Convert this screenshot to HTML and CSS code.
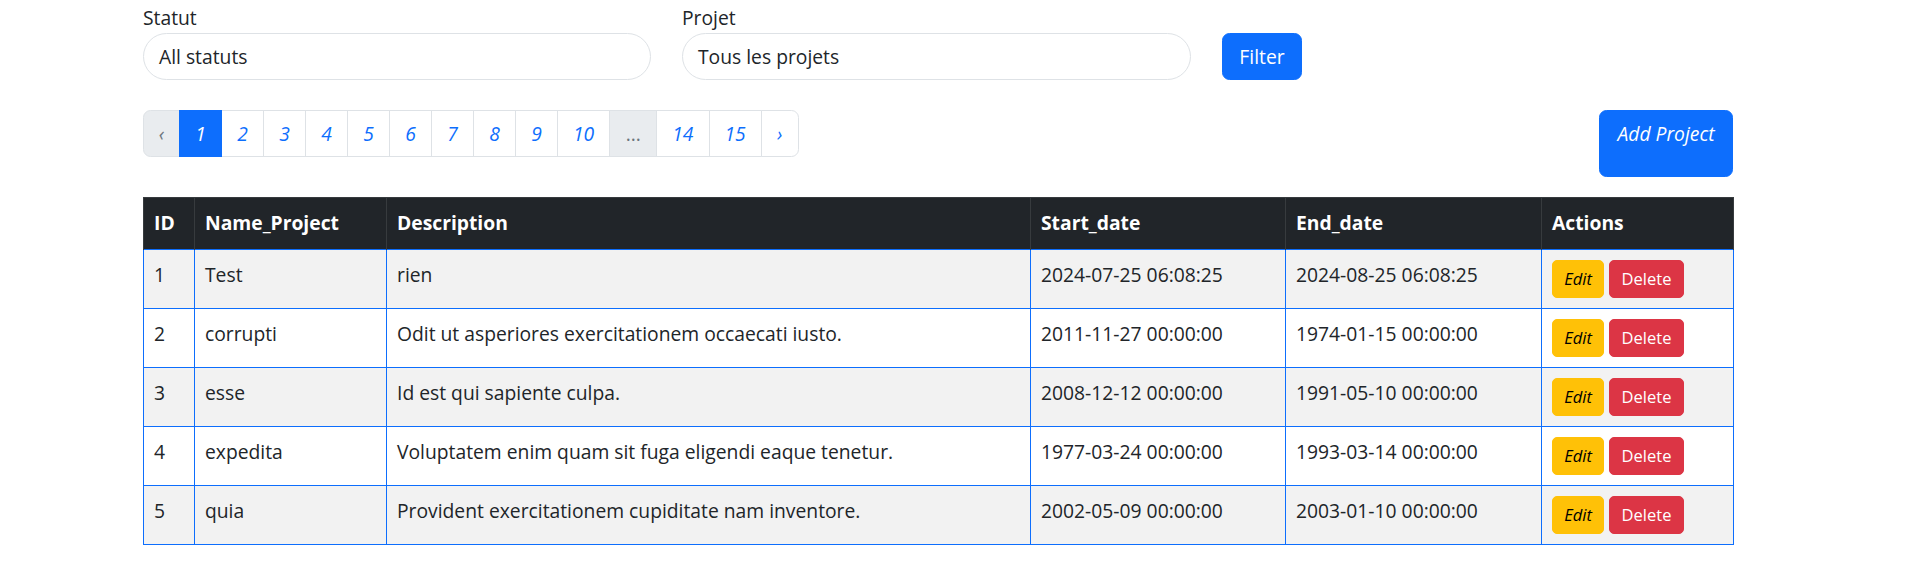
FILE: index.html
```html
<!DOCTYPE html>
<html lang="fr">
<head>
<meta charset="utf-8">
<title>Projets</title>
<link rel="stylesheet" href="styles.css">
</head>
<body>
<div class="page">
  <form class="filters">
    <div class="field field-statut">
      <label class="label">Statut</label>
      <div class="select">All statuts</div>
    </div>
    <div class="field field-projet">
      <label class="label">Projet</label>
      <div class="select">Tous les projets</div>
    </div>
    <button type="button" class="btn btn-primary btn-filter">Filter</button>
  </form>

  <div class="toolbar">
    <ul class="pagination">
      <li class="page-item disabled"><span class="page-link">&lsaquo;</span></li>
      <li class="page-item active"><span class="page-link">1</span></li>
      <li class="page-item"><span class="page-link">2</span></li>
      <li class="page-item"><span class="page-link">3</span></li>
      <li class="page-item"><span class="page-link">4</span></li>
      <li class="page-item"><span class="page-link">5</span></li>
      <li class="page-item"><span class="page-link">6</span></li>
      <li class="page-item"><span class="page-link">7</span></li>
      <li class="page-item"><span class="page-link">8</span></li>
      <li class="page-item"><span class="page-link">9</span></li>
      <li class="page-item"><span class="page-link">10</span></li>
      <li class="page-item disabled"><span class="page-link dots">...</span></li>
      <li class="page-item"><span class="page-link">14</span></li>
      <li class="page-item"><span class="page-link">15</span></li>
      <li class="page-item"><span class="page-link">&rsaquo;</span></li>
    </ul>
    <button type="button" class="btn btn-primary btn-add">Add Project</button>
  </div>

  <table class="projects">
    <colgroup>
      <col class="c-id"><col class="c-name"><col class="c-desc"><col class="c-start"><col class="c-end"><col class="c-act">
    </colgroup>
    <thead>
      <tr><th>ID</th><th>Name_Project</th><th>Description</th><th>Start_date</th><th>End_date</th><th>Actions</th></tr>
    </thead>
    <tbody>
      <tr class="odd"><td>1</td><td>Test</td><td>rien</td><td>2024-07-25 06:08:25</td><td>2024-08-25 06:08:25</td><td><span class="actions"><button class="btn btn-sm btn-warning">Edit</button><button class="btn btn-sm btn-danger">Delete</button></span></td></tr>
      <tr><td>2</td><td>corrupti</td><td>Odit ut asperiores exercitationem occaecati iusto.</td><td>2011-11-27 00:00:00</td><td>1974-01-15 00:00:00</td><td><span class="actions"><button class="btn btn-sm btn-warning">Edit</button><button class="btn btn-sm btn-danger">Delete</button></span></td></tr>
      <tr class="odd"><td>3</td><td>esse</td><td>Id est qui sapiente culpa.</td><td>2008-12-12 00:00:00</td><td>1991-05-10 00:00:00</td><td><span class="actions"><button class="btn btn-sm btn-warning">Edit</button><button class="btn btn-sm btn-danger">Delete</button></span></td></tr>
      <tr><td>4</td><td>expedita</td><td>Voluptatem enim quam sit fuga eligendi eaque tenetur.</td><td>1977-03-24 00:00:00</td><td>1993-03-14 00:00:00</td><td><span class="actions"><button class="btn btn-sm btn-warning">Edit</button><button class="btn btn-sm btn-danger">Delete</button></span></td></tr>
      <tr class="odd"><td>5</td><td>quia</td><td>Provident exercitationem cupiditate nam inventore.</td><td>2002-05-09 00:00:00</td><td>2003-01-10 00:00:00</td><td><span class="actions"><button class="btn btn-sm btn-warning">Edit</button><button class="btn btn-sm btn-danger">Delete</button></span></td></tr>
    </tbody>
  </table>
</div>
</body>
</html>
```
FILE: styles.css
```css
* { box-sizing: border-box; }
html, body { margin: 0; padding: 0; }
body {
  font-family: "Open Sans", "Noto Sans", sans-serif;
  font-size: 19.3px;
  line-height: 30px;
  color: #212529;
  background: #fff;
}
.page {
  width: 1733px;
  padding: 3px 0 0 143px;
}
.filters {
  display: flex;
  align-items: flex-end;
  gap: 31px;
  margin: 0;
}
.field { display: flex; flex-direction: column; }
.field-statut { width: 508px; }
.field-projet { width: 509px; }
.label { display: block; line-height: 30px; }
.select {
  height: 47px;
  border: 1px solid #dee2e6;
  border-radius: 24px;
  padding: 7.5px 15px;
  line-height: 30px;
  background: #fff;
}
.btn {
  font-family: inherit;
  font-size: 19.3px;
  line-height: 30px;
  border: 1px solid transparent;
  border-radius: 7.5px;
  padding: 7.5px 15px;
  cursor: pointer;
}
.btn-primary { background: #0d6efd; border-color: #0d6efd; color: #fff; }
.btn-filter { height: 47px; width: 80px; padding: 0; }
.toolbar {
  display: flex;
  justify-content: space-between;
  align-items: flex-start;
  margin-top: 30px;
}
.pagination {
  display: flex;
  list-style: none;
  margin: 0;
  padding: 0;
  font-style: italic;
}
.page-link {
  display: block;
  height: 47px;
  min-width: 43px;
  padding: 7.5px 15px;
  text-align: center;
  line-height: 30px;
  border: 1px solid #dee2e6;
  margin-left: -1px;
  color: #0d6efd;
  background: #fff;
}
.page-item:first-child .page-link {
  margin-left: 0;
  min-width: 37px;
  padding: 7.5px 0;
  border-radius: 7.5px 0 0 7.5px;
}
.page-item:last-child .page-link {
  min-width: 38px;
  padding: 7.5px 0;
  border-radius: 0 7.5px 7.5px 0;
}
.page-item.disabled .page-link { background: #e9ecef; color: #6c757d; }
.page-item.active .page-link { background: #0d6efd; border-color: #0d6efd; color: #fff; position: relative; }
.page-link.dots { font-style: normal; min-width: 48px; padding: 7.5px 0; }
.btn-add {
  font-style: italic;
  width: 134px;
  height: 67px;
  padding: 7.5px 0 27.5px;
}
.projects {
  margin-top: 20px;
  width: 1590px;
  table-layout: fixed;
  border-collapse: collapse;
}
.c-id { width: 51px; }
.c-name { width: 192px; }
.c-desc { width: 644px; }
.c-start { width: 255px; }
.c-end { width: 256px; }
.c-act { width: 192px; }
.projects th {
  background: #212529;
  color: #fff;
  font-weight: 700;
  text-align: left;
  padding: 10px 10px 11px;
  border: 1px solid #373b3e;
  border-bottom: 0;
  line-height: 30px;
  vertical-align: top;
}
.projects td {
  padding: 10px 10px;
  border: 1px solid #0d6efd;
  vertical-align: top;
  line-height: 30px;
  background: #fff;
}
.projects tr.odd td { background: #f2f2f2; }
.actions { display: flex; gap: 5px; }
.btn-sm {
  font-size: 16.5px;
  line-height: 26px;
  padding: 5px 10px;
  border-radius: 5px;
  height: 38px;
}
.btn-warning { background: #ffc107; border-color: #ffc107; color: #000; font-style: italic; width: 52px; padding: 5px 0; }
.btn-danger { background: #dc3545; border-color: #dc3545; color: #fff; width: 75px; padding: 5px 0; }
```
